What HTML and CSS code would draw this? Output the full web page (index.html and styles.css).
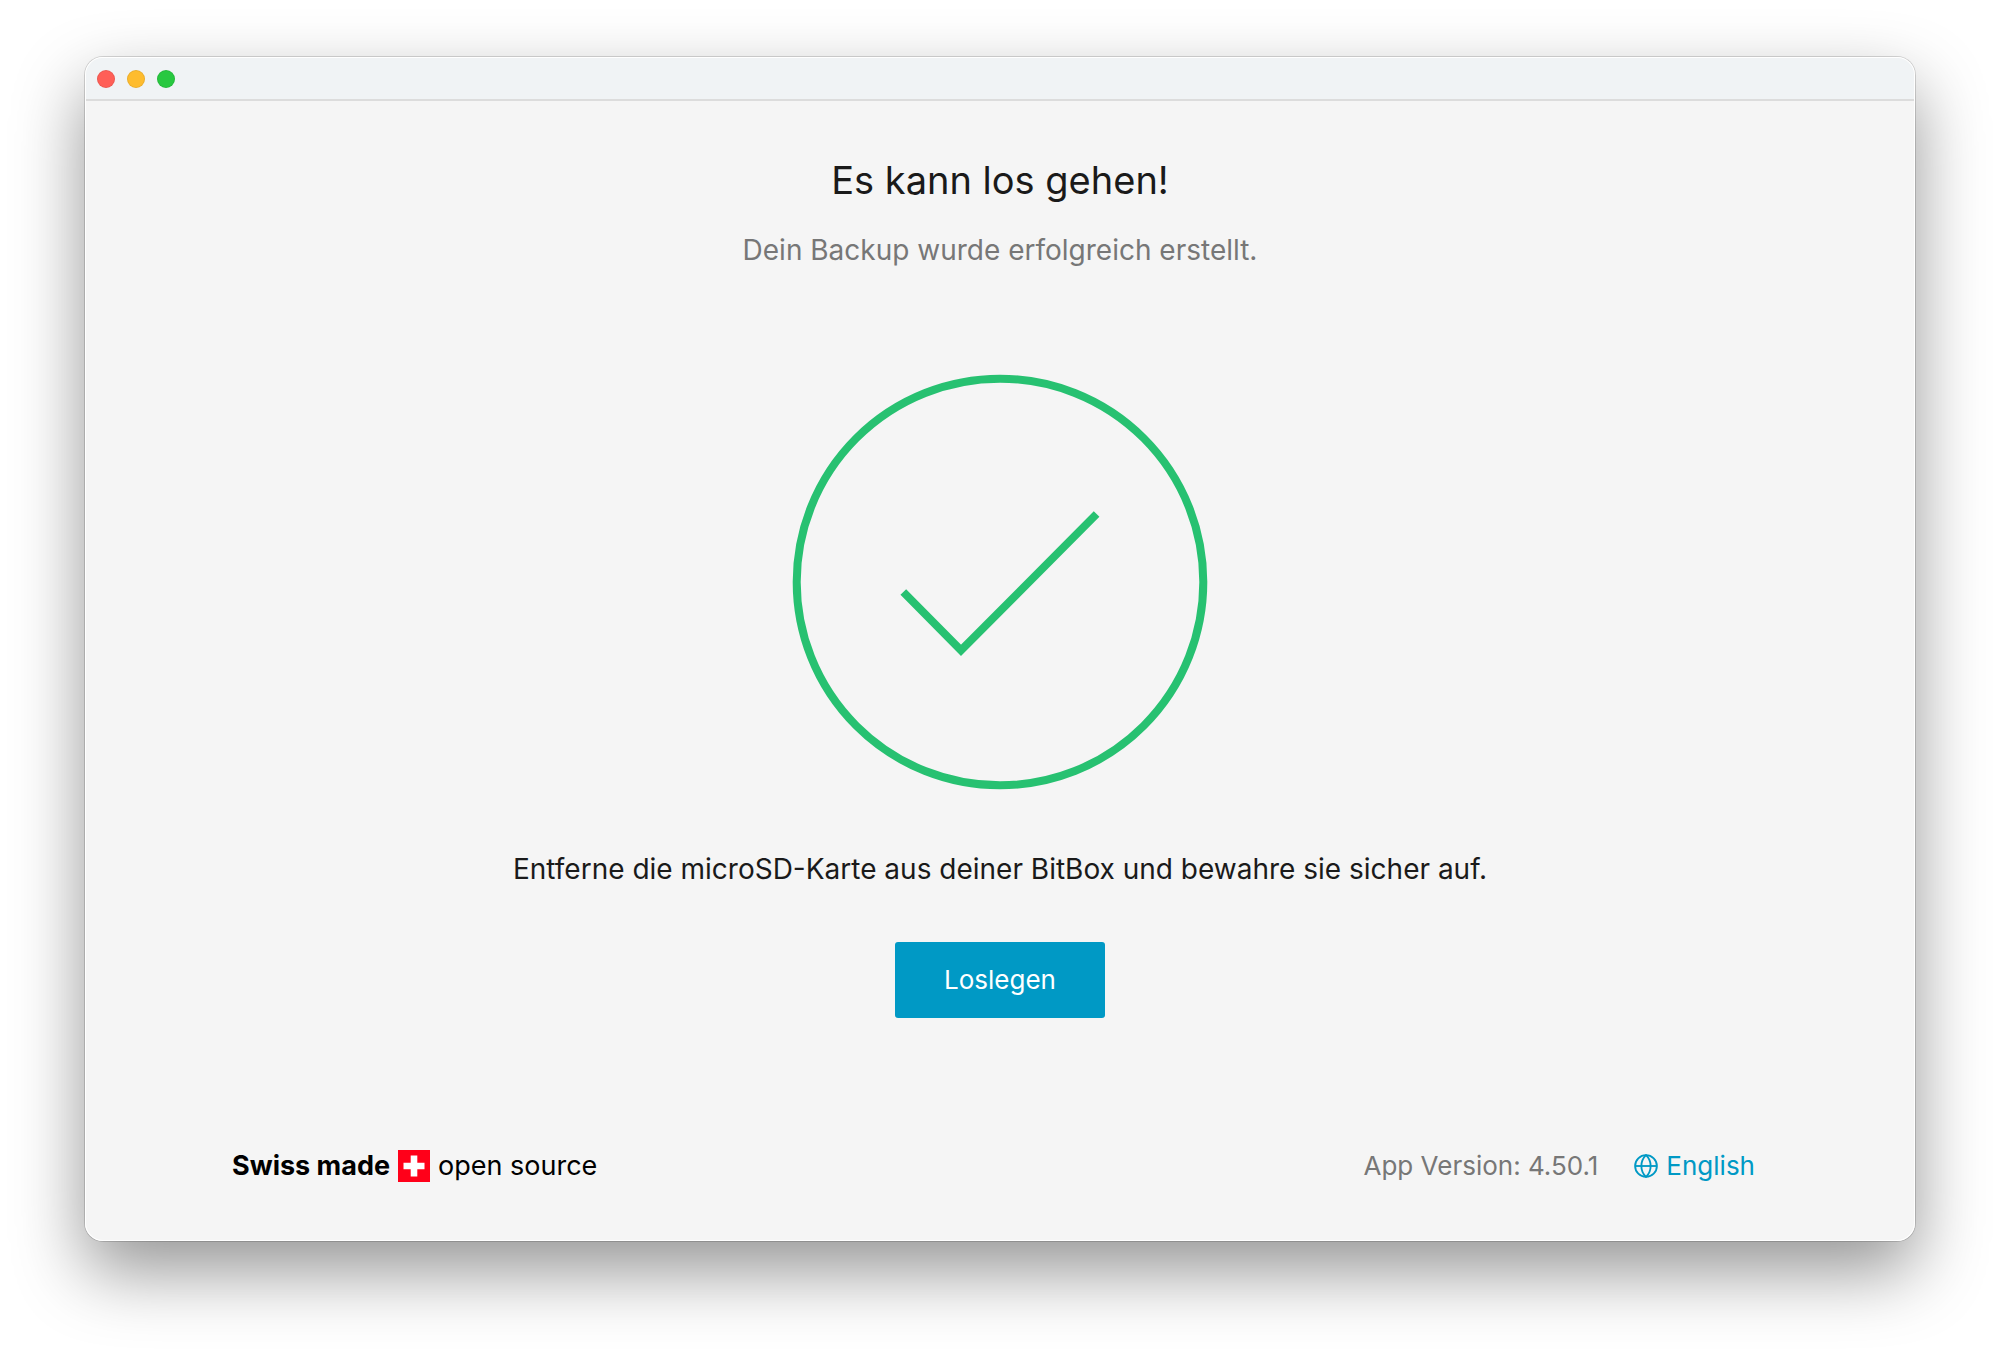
FILE: index.html
```html
<!DOCTYPE html>
<html lang="de">
<head>
    <meta charset="UTF-8">
    <meta name="viewport" content="width=device-width, initial-scale=1.0">
    <title>BitBox</title>
    <link rel="stylesheet" href="styles.css">
</head>
<body>
    <div class="window">
        <div class="titlebar">
            <span class="dot dot-close"></span>
            <span class="dot dot-minimize"></span>
            <span class="dot dot-zoom"></span>
        </div>

        <main class="content">
            <h1>Es kann los gehen!</h1>
            <p class="subtitle">Dein Backup wurde erfolgreich erstellt.</p>
            <svg class="check" viewBox="0 0 416 416" aria-hidden="true">
                <circle cx="208" cy="208" r="203.3"/>
                <path d="M111.3 218 L169 276.4 L304.6 140"/>
            </svg>
            <p class="message">Entferne die microSD-Karte aus deiner BitBox und bewahre sie sicher auf.</p>
            <button type="button" class="primary">Loslegen</button>
        </main>

        <footer class="footer">
            <div class="swiss">
                <strong>Swiss made</strong>
                <svg class="flag" viewBox="0 0 32 32" aria-hidden="true">
                    <rect width="32" height="32" fill="#ff0019"/>
                    <path d="M12.7 5.5h6.6v7.2h7.2v6.6h-7.2v7.2h-6.6v-7.2H5.5v-6.6h7.2z" fill="#fff"/>
                </svg>
                <span>open source</span>
            </div>
            <div class="footer-right">
                <span>App Version: 4.50.1</span>
                <button type="button" class="language">
                    <svg class="globe" viewBox="0 0 26 26" aria-hidden="true">
                        <circle cx="13" cy="13" r="11.8"/>
                        <path d="M13 1.2C6.3 7.5 6.3 18.5 13 24.8C19.7 18.5 19.7 7.5 13 1.2z"/>
                        <path d="M1.2 13h23.6"/>
                    </svg>
                    English
                </button>
            </div>
        </footer>
    </div>
</body>
</html>
```
FILE: styles.css
```css
* {
    box-sizing: border-box;
}
body {
    margin: 0;
    min-height: 100vh;
    padding: 57px 85px 112px;
    display: flex;
    background-color: #fff;
    color: #1a1a1a;
    font-family: Inter, "Liberation Sans", sans-serif;
    font-size: 28px;
    line-height: 40px;
}
h1, p {
    margin: 0;
    font-weight: 400;
}
button {
    border: none;
    font-family: inherit;
    cursor: pointer;
}
.window {
    flex: 1;
    display: flex;
    flex-direction: column;
    overflow: hidden;
    border-radius: 18px;
    background-color: #f5f5f5;
    box-shadow: inset 0 0 0 1px #fff, 0 0 0 1px rgba(0, 0, 0, 0.15), 0 30px 70px rgba(0, 0, 0, 0.42);
}
.titlebar {
    display: flex;
    align-items: center;
    gap: 12px;
    height: 43px;
    margin: 1px 1px 0;
    padding: 0 11px;
    border-bottom: 2px solid #dcdcdc;
    border-radius: 17px 17px 0 0;
    background-color: #f0f3f5;
}
.dot {
    width: 18px;
    height: 18px;
    border-radius: 50%;
    border: 1px solid rgba(0, 0, 0, 0.08);
}
.dot-close {
    background-color: #ff5f57;
}
.dot-minimize {
    background-color: #febc2e;
}
.dot-zoom {
    background-color: #28c840;
}
.content {
    flex: 1;
    display: flex;
    flex-direction: column;
    align-items: center;
    padding: 49px 40px 0;
    text-align: center;
}
h1 {
    font-size: 38px;
    line-height: 60px;
}
.subtitle {
    margin-top: 20px;
    color: #777;
}
.check {
    width: 416px;
    height: 416px;
    margin: 104px 0 59px;
    fill: none;
    stroke: #27c171;
    stroke-width: 8;
}
.primary {
    min-width: 210px;
    margin-top: 53px;
    padding: 18px 48px;
    border-radius: 3px;
    background-color: #0099c5;
    color: #fff;
    font-size: 26px;
    line-height: 40px;
}
.footer {
    display: flex;
    align-items: center;
    justify-content: space-between;
    padding: 0 160px 55px 147px;
    font-size: 26px;
}
.swiss {
    display: flex;
    align-items: center;
    gap: 8px;
    color: #000;
    font-size: 27px;
}
.flag {
    width: 32px;
    height: 32px;
}
.footer-right {
    display: flex;
    align-items: center;
    gap: 36px;
    color: #777;
}
.language {
    display: flex;
    align-items: center;
    gap: 8px;
    padding: 0;
    background: none;
    color: #0099c5;
    font-size: 26px;
    line-height: 40px;
}
.globe {
    width: 24px;
    height: 24px;
    fill: none;
    stroke: currentColor;
    stroke-width: 2;
}
```
